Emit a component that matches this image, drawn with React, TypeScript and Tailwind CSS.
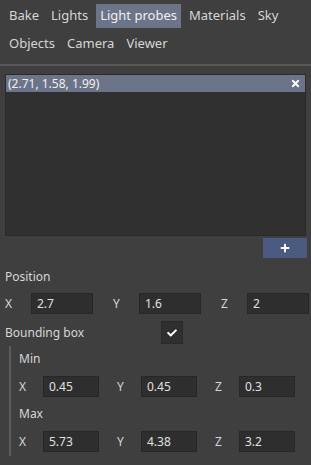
import { FaCheck, FaPlus, FaTimes } from "react-icons/fa";

const tabsTop = ["Bake", "Lights", "Light probes", "Materials", "Sky"];
const tabsBottom = ["Objects", "Camera", "Viewer"];

function Tab({ label, active }: { label: string; active?: boolean }) {
    return (
        <div
            className={
                "flex h-6 items-center px-[4px] text-[13px] " +
                (active ? "bg-[#6b7488] text-[#f0f0f0]" : "text-[#d6d6d6]")
            }
        >
            {label}
        </div>
    );
}

function Field({
    axis,
    value,
    colW,
    labelW,
    inputW,
}: {
    axis: string;
    value: string;
    colW: string;
    labelW: string;
    inputW: string;
}) {
    return (
        <div className={"flex shrink-0 items-center " + colW}>
            <span className={"shrink-0 " + labelW}>{axis}</span>
            <div
                className={
                    "flex h-[21px] shrink-0 items-center border border-[#272727] bg-[#2e2e2e] px-[5px] text-[#e0e0e0] " +
                    inputW
                }
            >
                {value}
            </div>
        </div>
    );
}

function SmallRow({ values }: { values: string[] }) {
    return (
        <div className="flex">
            <Field axis="X" value={values[0]} colW="w-[98px]" labelW="w-[24px]" inputW="w-[56px]" />
            <Field axis="Y" value={values[1]} colW="w-[98px]" labelW="w-[24px]" inputW="w-[56px]" />
            <Field axis="Z" value={values[2]} colW="w-[80px]" labelW="w-[24px]" inputW="w-[56px]" />
        </div>
    );
}

export default function App() {
    return (
        <div
            className="h-[465px] w-[311px] overflow-hidden bg-[#3f3f3f] text-[12px] text-[#d6d6d6]"
            style={{ fontFamily: '"Noto Sans", "Open Sans", sans-serif' }}
        >
            <div className="flex flex-col gap-1 px-[5px] pt-1">
                <div className="flex gap-[4px]">
                    {tabsTop.map((t) => (
                        <Tab key={t} label={t} active={t === "Light probes"} />
                    ))}
                </div>
                <div className="flex gap-[4px]">
                    {tabsBottom.map((t) => (
                        <Tab key={t} label={t} />
                    ))}
                </div>
            </div>

            <div className="mt-2 h-[2px] bg-[#575757]" />

            <div className="mx-[5px] mt-2 h-[162px] border border-[#2a2a2a] bg-[#303030]">
                <div className="flex h-[17px] items-center justify-between bg-[#6b7488] pl-[2px] pr-[4px] text-[#f0f0f0]">
                    <span>(2.71, 1.58, 1.99)</span>
                    <FaTimes className="h-[11px] w-[11px] text-white" />
                </div>
            </div>

            <div className="mr-[4px] mt-[2px] flex justify-end">
                <div className="flex h-5 w-[44px] items-center justify-center bg-[#4a5a80]">
                    <FaPlus className="h-[10px] w-[10px] text-white" />
                </div>
            </div>

            <div className="px-[5px]">
                <div className="mt-[10px] leading-[18px]">Position</div>
                <div className="mt-[7px] flex">
                    <Field axis="X" value="2.7" colW="w-[108px]" labelW="w-[26px]" inputW="w-[62px]" />
                    <Field axis="Y" value="1.6" colW="w-[108px]" labelW="w-[26px]" inputW="w-[62px]" />
                    <Field axis="Z" value="2" colW="w-[88px]" labelW="w-[26px]" inputW="w-[62px]" />
                </div>

                <div className="mt-[7px] flex items-center">
                    <span className="w-[156px]">Bounding box</span>
                    <div className="flex h-[23px] w-[22px] items-center justify-center border border-[#2a2a2a] bg-[#2f2f2f]">
                        <FaCheck className="h-[10px] w-[10px] text-white" />
                    </div>
                </div>

                <div className="ml-[4px] mt-[2px] border-l-2 border-[#5c5c5c] pb-[4px] pl-[8px]">
                    <div className="pt-[4px] leading-[18px]">Min</div>
                    <div className="mt-[8px]">
                        <SmallRow values={["0.45", "0.45", "0.3"]} />
                    </div>
                    <div className="mt-[8px] leading-[18px]">Max</div>
                    <div className="mt-[8px]">
                        <SmallRow values={["5.73", "4.38", "3.2"]} />
                    </div>
                </div>
            </div>
        </div>
    );
}
